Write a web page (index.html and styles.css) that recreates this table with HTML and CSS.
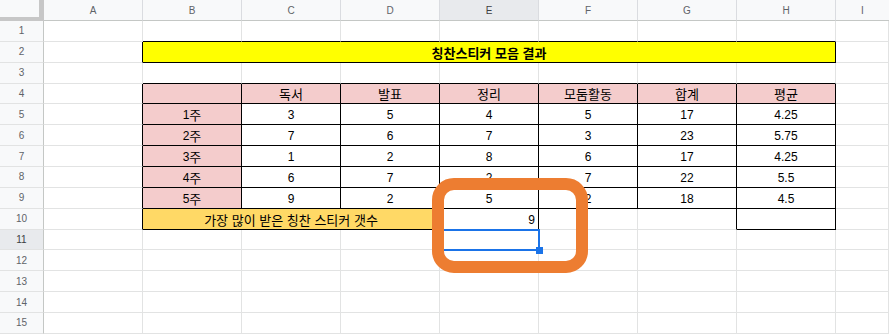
FILE: index.html
```html
<!DOCTYPE html>
<html lang="ko">
<head>
<meta charset="utf-8">
<title>칭찬스티커 모음 결과</title>
<link rel="stylesheet" href="styles.css">
</head>
<body>
<div class="sheet">
  <!-- column headers -->
  <div class="corner"></div>
  <div class="ch">A</div><div class="ch">B</div><div class="ch">C</div><div class="ch">D</div>
  <div class="ch sel">E</div><div class="ch">F</div><div class="ch">G</div><div class="ch">H</div><div class="ch last">I</div>

  <!-- row 1 -->
  <div class="rh">1</div>
  <div class="c"></div><div class="c bb"></div><div class="c bb"></div><div class="c bb"></div><div class="c bb"></div><div class="c bb"></div><div class="c bb"></div><div class="c bb"></div><div class="c"></div>

  <!-- row 2 -->
  <div class="rh">2</div>
  <div class="c br"></div>
  <div class="c bb br yellow title span7"><span class="ko">칭찬스티커 모음 결과</span></div>
  <div class="c"></div>

  <!-- row 3 -->
  <div class="rh">3</div>
  <div class="c"></div><div class="c bb"></div><div class="c bb"></div><div class="c bb"></div><div class="c bb"></div><div class="c bb"></div><div class="c bb"></div><div class="c bb"></div><div class="c"></div>

  <!-- row 4 -->
  <div class="rh">4</div>
  <div class="c br"></div>
  <div class="c bb br pink"></div>
  <div class="c bb br pink"><span class="ko">독서</span></div>
  <div class="c bb br pink"><span class="ko">발표</span></div>
  <div class="c bb br pink"><span class="ko">정리</span></div>
  <div class="c bb br pink"><span class="ko">모둠활동</span></div>
  <div class="c bb br pink"><span class="ko">합계</span></div>
  <div class="c bb br pink"><span class="ko">평균</span></div>
  <div class="c"></div>

  <!-- row 5 -->
  <div class="rh">5</div>
  <div class="c br"></div>
  <div class="c bb br pink">1<span class="ko">주</span></div>
  <div class="c bb br">3</div><div class="c bb br">5</div><div class="c bb br">4</div><div class="c bb br">5</div><div class="c bb br">17</div><div class="c bb br">4.25</div>
  <div class="c"></div>

  <!-- row 6 -->
  <div class="rh">6</div>
  <div class="c br"></div>
  <div class="c bb br pink">2<span class="ko">주</span></div>
  <div class="c bb br">7</div><div class="c bb br">6</div><div class="c bb br">7</div><div class="c bb br">3</div><div class="c bb br">23</div><div class="c bb br">5.75</div>
  <div class="c"></div>

  <!-- row 7 -->
  <div class="rh">7</div>
  <div class="c br"></div>
  <div class="c bb br pink">3<span class="ko">주</span></div>
  <div class="c bb br">1</div><div class="c bb br">2</div><div class="c bb br">8</div><div class="c bb br">6</div><div class="c bb br">17</div><div class="c bb br">4.25</div>
  <div class="c"></div>

  <!-- row 8 -->
  <div class="rh">8</div>
  <div class="c br"></div>
  <div class="c bb br pink">4<span class="ko">주</span></div>
  <div class="c bb br">6</div><div class="c bb br">7</div><div class="c bb br">2</div><div class="c bb br">7</div><div class="c bb br">22</div><div class="c bb br">5.5</div>
  <div class="c"></div>

  <!-- row 9 -->
  <div class="rh">9</div>
  <div class="c br"></div>
  <div class="c bb br pink">5<span class="ko">주</span></div>
  <div class="c bb br">9</div><div class="c bb br">2</div><div class="c bb br">5</div><div class="c bb br">2</div><div class="c bb br">18</div><div class="c bb br">4.5</div>
  <div class="c"></div>

  <!-- row 10 -->
  <div class="rh">10</div>
  <div class="c br"></div>
  <div class="c bb br gold span3"><span class="ko">가장 많이 받은 칭찬 스티커 갯수</span></div>
  <div class="c br right">9</div>
  <div class="c"></div>
  <div class="c br"></div>
  <div class="c bb br"></div>
  <div class="c"></div>

  <!-- rows 11-15 -->
  <div class="rh sel">11</div>
  <div class="c"></div><div class="c"></div><div class="c"></div><div class="c"></div><div class="c"></div><div class="c"></div><div class="c"></div><div class="c"></div><div class="c"></div>
  <div class="rh">12</div>
  <div class="c"></div><div class="c"></div><div class="c"></div><div class="c"></div><div class="c"></div><div class="c"></div><div class="c"></div><div class="c"></div><div class="c"></div>
  <div class="rh">13</div>
  <div class="c"></div><div class="c"></div><div class="c"></div><div class="c"></div><div class="c"></div><div class="c"></div><div class="c"></div><div class="c"></div><div class="c"></div>
  <div class="rh">14</div>
  <div class="c"></div><div class="c"></div><div class="c"></div><div class="c"></div><div class="c"></div><div class="c"></div><div class="c"></div><div class="c"></div><div class="c"></div>
  <div class="rh">15</div>
  <div class="c"></div><div class="c"></div><div class="c"></div><div class="c"></div><div class="c"></div><div class="c"></div><div class="c"></div><div class="c"></div><div class="c"></div>

  <!-- overlays -->
  <div class="selection"><div class="handle"></div></div>
  <div class="callout"></div>
</div>
</body>
</html>
```
FILE: styles.css
```css
* { box-sizing: border-box; }
html, body { margin: 0; padding: 0; background: #fff; }
body { width: 889px; height: 336px; overflow: hidden; }

.sheet {
  position: relative;
  display: grid;
  grid-template-columns: 44px repeat(8, 99px) 1fr;
  grid-template-rows: 21px repeat(15, 20.87px);
  font-family: "Liberation Sans", Arial, "Noto Sans CJK KR", sans-serif;
  font-size: 12px;
  color: #000;
}

.corner {
  background: #f8f9fa;
  border-right: 5px solid #c7c7c7;
  border-bottom: 4px solid #c7c7c7;
}

.ch {
  background: #f8f9fa;
  border-right: 1px solid #dadce0;
  border-bottom: 1px solid #c4c7c5;
  display: flex;
  align-items: center;
  justify-content: center;
  font-size: 10px;
  color: #5f6368;
}
.ch.last { border-right: none; }

.rh {
  background: #f8f9fa;
  border-right: 1px solid #c4c7c5;
  border-bottom: 1px solid #e2e3e3;
  display: flex;
  align-items: center;
  justify-content: center;
  font-size: 10px;
  color: #5f6368;
}
.sel { background: #e8eaed; color: #3c4043; }

.c {
  border-right: 1px solid #e2e3e3;
  border-bottom: 1px solid #e2e3e3;
  display: flex;
  align-items: flex-end;
  justify-content: center;
  padding: 0 3px 2px;
  line-height: 14px;
  white-space: nowrap;
  overflow: hidden;
}
.bb { border-bottom-color: #000; }
.br { border-right-color: #000; }
.right { justify-content: flex-end; }

.pink { background: #f4cccc; }
.yellow { background: #ffff00; }
.gold { background: #ffd966; }
.title { font-weight: bold; }

.span7 { grid-column: span 7; }
.span3 { grid-column: span 3; }

.ko {
  font-family: "Noto Sans CJK KR", "Liberation Sans", sans-serif;
  font-size: 13px;
}

.selection {
  position: absolute;
  left: 439px;
  top: 229px;
  width: 101px;
  height: 22px;
  border: 2px solid #1a73e8;
}
.handle {
  position: absolute;
  right: -5px;
  bottom: -5px;
  width: 7px;
  height: 7px;
  background: #1a73e8;
}

.callout {
  position: absolute;
  left: 432px;
  top: 178px;
  width: 156px;
  height: 95px;
  border: 12px solid #ed7d31;
  border-radius: 22px;
}
```
